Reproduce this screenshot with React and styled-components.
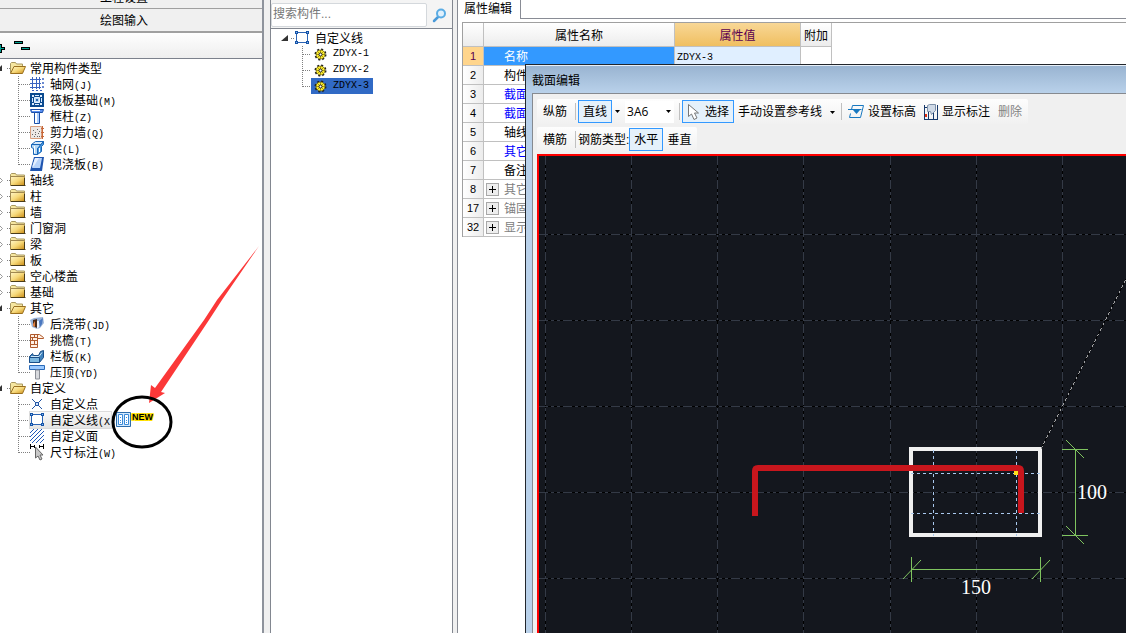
import React, { useState } from "react";
import styled, { createGlobalStyle } from "styled-components";

const GlobalStyle = createGlobalStyle`
  * {
    box-sizing: border-box;
  }
  body {
    margin: 0;
    overflow: hidden;
    background: #f0f0f0;
    color: #000;
    font-family: "Liberation Sans", "Noto Sans CJK SC", sans-serif;
    font-size: 12px;
    line-height: 16px;
  }
  button, input, select {
    font: inherit;
    color: inherit;
    margin: 0;
    padding: 0;
  }
  ul {
    list-style: none;
    margin: 0;
    padding: 0;
  }
`;

const commonTypes = [
  { icon: "grid", name: "轴网", hotkey: "(J)" },
  { icon: "raft", name: "筏板基础", hotkey: "(M)" },
  { icon: "column", name: "框柱", hotkey: "(Z)" },
  { icon: "wall", name: "剪力墙", hotkey: "(Q)" },
  { icon: "beam", name: "梁", hotkey: "(L)" },
  { icon: "slab", name: "现浇板", hotkey: "(B)" },
];

const otherTypes = [
  { icon: "strip", name: "后浇带", hotkey: "(JD)" },
  { icon: "eave", name: "挑檐", hotkey: "(T)" },
  { icon: "parapet", name: "栏板", hotkey: "(K)" },
  { icon: "coping", name: "压顶", hotkey: "(YD)" },
];

const customTypes = [
  { icon: "point", name: "自定义点" },
  { icon: "line", name: "自定义线", hotkey: "(X)", isNew: true },
  { icon: "area", name: "自定义面" },
  { icon: "dimension", name: "尺寸标注", hotkey: "(W)" },
];

const folders = [
  { name: "常用构件类型", items: commonTypes },
  { name: "轴线" },
  { name: "柱" },
  { name: "墙" },
  { name: "门窗洞" },
  { name: "梁" },
  { name: "板" },
  { name: "空心楼盖" },
  { name: "基础" },
  { name: "其它", items: otherTypes },
  { name: "自定义", items: customTypes },
];

const properties = [
  { id: 1, name: "名称", value: "ZDYX-3", selected: true },
  { id: 2, name: "构件类型" },
  { id: 3, name: "截面形状", color: "#0000ff" },
  { id: 4, name: "截面宽度", color: "#0000ff" },
  { id: 5, name: "轴线距左边线" },
  { id: 6, name: "其它钢筋", color: "#0000ff" },
  { id: 7, name: "备注" },
  { id: 8, name: "其它属性", color: "#808080", group: true },
  { id: 17, name: "锚固搭接", color: "#808080", group: true },
  { id: 32, name: "显示样式", color: "#808080", group: true },
];

const icons = {
  grid: (
    <g fill="none" stroke="#3a63c0">
      <path d="M0 3.500h11M0 7.500h11M0 11.500h11M2.500 1v12M6.500 1v12M9.500 1v12" />
      <path d="M12.500 2.500h1v1h-1zM12.500 6.500h1v1h-1zM12.500 10.500h1v1h-1zM2 14.500h2M6 14.500h2M10 14.500h2" />
    </g>
  ),
  raft: (
    <g>
      <path fill="#0b4a8f" d="M0 1h14v14H0z" />
      <path fill="#dcecff" d="M2 3h2v2H2zM10 3h2v2h-2zM2 11h2v2H2zM10 11h2v2h-2zM5 3h4v1H5zM5 12h4v1H5zM2 6h1v4H2zM11 6h1v4h-1z" />
      <path fill="#b8d8f8" stroke="#e8f4ff" d="M4.500 5.500h5v5h-5z" />
      <path fill="#2a6ab0" d="M6 7h2v2H6z" />
    </g>
  ),
  column: (
    <g>
      <path fill="#5b8ff0" stroke="#1a4fa8" d="M.5 1.500h13l-1 3h-11z" />
      <path fill="#a8ccff" stroke="#1a4fa8" d="M4.500 4.500h5v11h-5z" />
      <path fill="#fff" d="M5 5h2v10H5zM2 2h8v1H2z" />
    </g>
  ),
  wall: (
    <g>
      <path fill="#ece8e6" stroke="#d9a080" d="M.5 2.500h11v12H.5z" />
      <path fill="#666" d="M3 6h1v1H3zM7 5h1v1H7zM5 8h1v1H5zM2 10h1v1H2zM8 9h1v1H8zM4 12h1v1H4zM7 12h1v1H7zM9 7h1v1H9zM9 12h1v1H9zM5 10h1v1H5z" />
      <path stroke="#c8683a" d="M12.500 2v13M11 4.500h3M11 8.500h3M11 12.500h3" />
    </g>
  ),
  beam: (
    <g stroke="#1a66b8" strokeLinejoin="round">
      <path fill="#d5e9fa" d="M1.500 4.500l4-3h8l-3 3.500z" />
      <path fill="#b5d8f5" d="M1.500 4.500h9l-1 3-2 1v6h-4v-6l-2-1z" />
      <path fill="#4a9ae0" d="M7.500 8.500l3-3.500 3-3.500v3l-2 2v5l-4 3z" />
      <path stroke="#fff" d="M4.500 6v7M9.500 8v4" />
    </g>
  ),
  slab: (
    <g>
      <path fill="#1f55b0" d="M4 1h10l-2 14H0z" />
      <path fill="#b8d4fa" d="M5 2h7l-2 10H2z" />
      <path fill="#e6f0ff" d="M5 2h4l-5 8-2 1z" />
    </g>
  ),
  strip: (
    <g>
      <path fill="#9bb4d8" d="M0 4l4-2 9-1 1 6-4 5-3 1-5-2z" />
      <path fill="#4a2a18" d="M3 4l4-1v9l-4-2z" />
      <path fill="#e08040" d="M3 8l2-3v6l-2-1z" />
      <path fill="#4a78c0" d="M9 5l4-3-1 6-2 3z" />
      <path fill="#eef4ff" d="M7 5h2v6l-2 2z" />
    </g>
  ),
  eave: (
    <g fill="#fff0e4" stroke="#b05a2c">
      <path d="M.5 2.500h9l4 3v1h-6v9h-7z" />
      <path fill="none" d="M0 5.500h7M0 8.500h7M0 12.500h7M4.500 3v2M2.500 6v2M4.500 9v3M7.500 3v4" />
    </g>
  ),
  parapet: (
    <g stroke="#1b4f88" strokeLinejoin="round">
      <path fill="#3f82bd" d="M-.5 8.500l3-3 1 2h5l2-4 3-1v7l-4 5h-10z" />
      <path fill="#7db8e0" d="M-.5 9.500h10v5h-10z" />
      <path stroke="#cfe8f8" d="M1 8.500h8l3-4" fill="none" />
    </g>
  ),
  coping: (
    <g>
      <path fill="#9ccaff" stroke="#2a6ab8" d="M-.5 1.500h15v4h-15z" />
      <path fill="#d8dade" stroke="#8a8e96" d="M5.500 6h4v9h-4z" />
    </g>
  ),
  point: (
    <g fill="none" stroke="#2456a4">
      <path d="M2 3l4 4M12 3L8 7M2 13l4-4M12 13L8 9" />
      <path d="M5.500 6.500h3v3h-3z" fill="#cfe4ff" />
    </g>
  ),
  line: (
    <g>
      <path fill="#fff" stroke="#2c64b4" d="M1.500 2.500h11v10h-11z" />
      <path fill="#1554a8" d="M0 1h3v3H0zM11 1h3v3h-3zM0 11h3v3H0zM11 11h3v3h-3z" />
      <path fill="#8cb8ee" d="M1 2h1v1H1zM12 2h1v1h-1zM1 12h1v1H1zM12 12h1v1h-1z" />
    </g>
  ),
  area: (
    <path
      stroke="#2058b8"
      fill="none"
      d="M0 5l4-4M0 9l8-8M0 13L12 1M2 15L14 3M6 15l8-8M10 15l4-4"
    />
  ),
  dimension: (
    <g>
      <path stroke="#000" d="M.5 0v5M4.500 1v3M9.500 1v3M13.500 0v5M1 2.500h4M9 2.500h4" />
      <path fill="#c8c8c8" stroke="#666" d="M5.500 3v11l2.500-2 2 4 2-1-2-4h3z" />
    </g>
  ),
};

function ItemIcon({ type }) {
  return (
    <svg width="16" height="16" overflow="visible" aria-hidden="true">
      {icons[type]}
    </svg>
  );
}

function FolderIcon({ open }) {
  return (
    <svg width="16" height="16" aria-hidden="true">
      <defs>
        <linearGradient id="folder" x1="0" y1="0" x2="1" y2="1">
          <stop offset="0" stopColor="#fff6c8" />
          <stop offset=".5" stopColor="#f6d878" />
          <stop offset="1" stopColor="#c98a14" />
        </linearGradient>
      </defs>
      {open ? (
        <>
          <path d="M.5 13V3.500l1-1h4l1 1.500h6V7" fill="#f6e6a0" stroke="#a89860" />
          <path d="M.5 13.500L4 6.500h11.500l-3 7z" fill="url(#folder)" stroke="#9a7020" />
        </>
      ) : (
        <>
          <path d="M.5 5V2.500l1-1h4l1 1.500h8V6" fill="#f6e6a0" stroke="#a89860" />
          <path d="M.5 4.500h14v9H.5z" fill="url(#folder)" stroke="#a08850" />
          <path d="M1 13.500h14.500M14.500 6v8" stroke="#4a3c18" fill="none" />
        </>
      )}
    </svg>
  );
}

function Expander({ open }) {
  return (
    <svg width="24" height="16" aria-hidden="true">
      {open ? (
        <path d="M10 11l6-6v6z" fill="#333" />
      ) : (
        <path d="M12.500 4.500l4 4-4 4z" fill="#fff" stroke="#999" />
      )}
      <path d="M21 8.500h3" stroke="#808080" strokeDasharray="1 1" />
    </svg>
  );
}

function Branch({ last }) {
  return (
    <svg width="44" height="16" aria-hidden="true">
      <path
        d={`M32.500 0v${last ? 9 : 16}M33 8.500h11`}
        stroke="#808080"
        strokeDasharray="1 1"
        fill="none"
      />
    </svg>
  );
}

function NewMark() {
  return (
    <NewTag>
      <svg width="16" height="16" aria-hidden="true">
        <path fill="#d4eaff" stroke="#2c6cab" d="M.5 .5h14v14H.5z" />
        <path fill="#fff" stroke="#3a8ad8" d="M2.500 2.500h4v10h-4zM8.500 2.500h4v10h-4z" />
        <path stroke="#3a8ad8" d="M4 5.500h1M4 8.500h1M4 10.500h1M10 5.500h1M10 8.500h1M10 10.500h1" />
      </svg>
      <NewText>NEW</NewText>
    </NewTag>
  );
}

function Folder({ name, items }) {
  return (
    <li>
      <TreeRow>
        <Expander open={Boolean(items)} />
        <FolderIcon open={Boolean(items)} />
        <RowLabel>{name}</RowLabel>
      </TreeRow>
      {items && (
        <ul>
          {items.map((item, i) => (
            <TreeRow as="li" key={item.name}>
              <Branch last={i === items.length - 1} />
              <Hover $active={item.isNew}>
                <ItemIcon type={item.icon} />
                <RowLabel>
                  {item.name}
                  <Mono>{item.hotkey}</Mono>
                </RowLabel>
              </Hover>
              {item.isNew && <NewMark />}
            </TreeRow>
          ))}
        </ul>
      )}
    </li>
  );
}

function Gear() {
  return (
    <svg width="13" height="13" aria-hidden="true">
      <circle cx="6.500" cy="6.500" r="5" fill="none" stroke="#222" strokeWidth="2" strokeDasharray="2 1.930" />
      <circle cx="6.500" cy="6.500" r="4.500" fill="#ffee30" stroke="#5a5000" strokeWidth=".6" />
      <path d="M6.500 2v9M2 6.500h9M3.500 3.500l6 6M9.500 3.500l-6 6" stroke="#6a6000" strokeWidth=".6" />
      <circle cx="6.500" cy="6.500" r="1.500" fill="#fff" stroke="#222" />
    </svg>
  );
}

function Caret() {
  return (
    <svg width="5" height="3" aria-hidden="true">
      <path d="M0 0h5L2.500 3z" />
    </svg>
  );
}

const gridX = [6, 92, 178, 264, 351, 437, 523];
const gridY = [78, 164, 250, 336, 422];

function Section() {
  return (
    <svg width="100%" height="100%" role="img" aria-label="截面">
      <g fill="none" shapeRendering="crispEdges">
        {gridX.map((x) => (
          <g key={x}>
            <line x1={x + 0.5} x2={x + 0.5} y1="0" y2="100%" stroke="#000" />
            <line x1={x + 0.5} x2={x + 0.5} y1="0" y2="100%" stroke="#343a46" strokeDasharray="9 3 3 3 3 3" />
          </g>
        ))}
        {gridY.map((y) => (
          <g key={y}>
            <line y1={y + 0.5} y2={y + 0.5} x1="0" x2="100%" stroke="#000" />
            <line y1={y + 0.5} y2={y + 0.5} x1="0" x2="100%" stroke="#343a46" strokeDasharray="9 3 3 3 3 3" />
          </g>
        ))}
        <rect x="372" y="293" width="129" height="86" stroke="#f0f0f0" strokeWidth="4" />
        <path
          d="M394.500 294v86M477.500 294v86M372 317.500h130M372 357.500h130"
          stroke="#a9c8ee"
          strokeDasharray="3 3"
        />
        <path d="M502 293L588 121" stroke="#000" />
        <path d="M502 293L588 121" stroke="#a0a0a0" strokeDasharray="3 3" />
      </g>
      <path
        d="M216 360v-45q0-3 3-3h260q3 0 3 3v42"
        fill="none"
        stroke="#c8161d"
        strokeWidth="6"
      />
      <rect x="475" y="315" width="4" height="4" fill="#ffe11a" />
      <g fill="none" stroke="#7fc45f">
        <path d="M536.500 293v87M523 293.500h26M523 379.500h26" />
        <path d="M527 284l18 18M527 370l18 18" />
        <path d="M372 413.500h130M372.500 401v25M501.500 401v25" />
        <path d="M364 423l18-19M493 423l18-19" />
      </g>
      <g fill="#fff" fontFamily="Liberation Serif, serif" fontSize="20">
        <text x="538" y="343">100</text>
        <text x="422" y="438">150</text>
      </g>
    </svg>
  );
}

function SectionEditor() {
  const [direction, setDirection] = useState("水平");
  return (
    <Dialog>
      <DialogTitle>截面编辑</DialogTitle>
      <DialogBody>
        <Bars>
          <Toolbar>
            <ToolText>纵筋</ToolText>
            <Divider />
            <ToolButton $active>直线</ToolButton>
            <CaretButton aria-label="更多线型">
              <Caret />
            </CaretButton>
            <SelectBox>
              <BarSelect aria-label="钢筋信息" defaultValue="3A6">
                <option>3A6</option>
              </BarSelect>
              <Caret />
            </SelectBox>
            <Divider />
            <ToolButton $active>
              <svg width="14" height="18" aria-hidden="true">
                <path d="M1.500 1.500v12l3-2.500 2.500 5.500 3-1.500-2.500-5h4z" fill="#fff" stroke="#777" />
              </svg>
              选择
            </ToolButton>
            <ToolButton>
              手动设置参考线
              <MenuCaret>
                <Caret />
              </MenuCaret>
            </ToolButton>
            <Divider />
            <ToolButton>
              <svg width="16" height="16" aria-hidden="true">
                <path d="M3.500 5.500l1-4h11l-3 12h-11l1-4M0 5.500h13.500" fill="none" stroke="#1878c0" />
                <path d="M5 6h7l-3.500 4z" fill="#1878c0" />
              </svg>
              设置标高
            </ToolButton>
            <ToolButton>
              <svg width="14" height="16" aria-hidden="true">
                <path d="M.5 1v15M13.500 1v15M4.500 8v8M9.500 8v8M0 15.500h14M1 3.500h3" stroke="#16386a" fill="none" />
                <path d="M3.500 1.500l2-1h6v6l-4 4-1-3h-3z" fill="#cfd9e6" stroke="#7d90a8" />
                <path d="M1 10h2v3H1z" fill="#e03010" />
              </svg>
              显示标注
            </ToolButton>
            <ToolButton disabled>删除</ToolButton>
          </Toolbar>
          <Toolbar>
            <ToolText>横筋</ToolText>
            <Divider />
            <ToolLabel>钢筋类型:</ToolLabel>
            {["水平", "垂直"].map((name) => (
              <ToolButton
                key={name}
                $active={direction === name}
                onClick={() => setDirection(name)}
              >
                {name}
              </ToolButton>
            ))}
          </Toolbar>
        </Bars>
        <Canvas>
          <Section />
        </Canvas>
      </DialogBody>
    </Dialog>
  );
}

function App() {
  return (
    <>
      <GlobalStyle />
      <Page>
        <Sidebar>
          <NavButton>工程设置</NavButton>
          <NavButton>绘图输入</NavButton>
          <TreeTools>
            <IconButton aria-label="全部展开">
              <svg width="16" height="12" aria-hidden="true">
                <path d="M9 4h3V1h3v3h3v3h-3v3h-3V7H9z" transform="translate(-3 1)" />
                <path d="M7 6.500h7M10.500 3v7" stroke="#00a090" />
              </svg>
            </IconButton>
            <IconButton aria-label="全部折叠">
              <svg width="17" height="14" aria-hidden="true">
                <path d="M0 0h9v3H0zM7 6h9v3H7z" />
                <path d="M1 1.500h7M8 7.500h7" stroke="#00a090" />
              </svg>
            </IconButton>
          </TreeTools>
          <Tree>
            {folders.map((folder) => (
              <Folder key={folder.name} {...folder} />
            ))}
          </Tree>
        </Sidebar>

        <Members>
          <Search>
            <SearchInput aria-label="搜索构件" placeholder="搜索构件..." />
            <SearchButton aria-label="搜索">
              <svg width="16" height="16" aria-hidden="true">
                <path d="M2 14l4-4" stroke="#4a9ad8" strokeWidth="2.500" strokeLinecap="round" />
                <circle cx="9" cy="6.500" r="4" fill="#dff0fc" stroke="#5aace4" strokeWidth="2" />
              </svg>
            </SearchButton>
          </Search>
          <MemberTree>
            <li>
              <TreeRow>
                <svg width="24" height="16" aria-hidden="true">
                  <path d="M10 11l7-6v6z" fill="#333" />
                  <path d="M20 8.500h3" stroke="#808080" strokeDasharray="1 1" />
                </svg>
                <ItemIcon type="line" />
                <RowLabel>自定义线</RowLabel>
              </TreeRow>
              <ul>
                {["ZDYX-1", "ZDYX-2", "ZDYX-3"].map((name) => (
                  <TreeRow as="li" key={name}>
                    <svg width="40" height="16" aria-hidden="true">
                      <path
                        d={`M31.500 0v${name === "ZDYX-3" ? 9 : 16}M32 8.500h8`}
                        stroke="#808080"
                        strokeDasharray="1 1"
                        fill="none"
                      />
                    </svg>
                    <Member $selected={name === "ZDYX-3"}>
                      <Gear />
                      <Mono>{name}</Mono>
                    </Member>
                  </TreeRow>
                ))}
              </ul>
            </li>
          </MemberTree>
        </Members>

        <Properties>
          <TabBar>
            <Tab>属性编辑</Tab>
          </TabBar>
          <TableFrame>
            <Table>
              <colgroup>
                <col width="21" />
                <col width="191" />
                <col width="126" />
                <col width="31" />
              </colgroup>
              <thead>
                <tr>
                  <HeadCell aria-label="序号" />
                  <HeadCell>属性名称</HeadCell>
                  <HeadCell $current>属性值</HeadCell>
                  <HeadCell>附加</HeadCell>
                </tr>
              </thead>
              <tbody>
                {properties.map((row) => (
                  <tr key={row.id}>
                    <NumCell $current={row.selected}>{row.id}</NumCell>
                    <NameCell $color={row.color} $selected={row.selected}>
                      <NameInner>
                        <Slot>
                          {row.group && (
                            <PlusButton aria-label={`展开${row.name}`}>
                              <svg width="7" height="7" aria-hidden="true">
                                <path d="M0 3.500h7M3.500 0v7" stroke="#000" />
                              </svg>
                            </PlusButton>
                          )}
                        </Slot>
                        <NameText>{row.name}</NameText>
                      </NameInner>
                    </NameCell>
                    <ValueCell $selected={row.selected}>
                      <Mono>{row.value}</Mono>
                    </ValueCell>
                    <ValueCell />
                  </tr>
                ))}
              </tbody>
            </Table>
          </TableFrame>
          <SectionEditor />
        </Properties>

        <Callout width="264" height="460" aria-hidden="true">
          <path
            d="M259 246L217 300 204 320 155 388 151 385 149 403 165 393 161 392 209 320 222 300z"
            fill="#fb3838"
          />
          <ellipse cx="142" cy="422" rx="29" ry="25" fill="none" stroke="#000" strokeWidth="3" />
        </Callout>
      </Page>
    </>
  );
}

const Page = styled.div`
  position: relative;
  display: flex;
  height: 100vh;
  overflow: hidden;
`;

/* the sidebar starts a little outside the window */
const Sidebar = styled.div`
  display: flex;
  flex-direction: column;
  flex: 0 0 278px;
  margin: -14px 0 0 -14px;
  border-right: 2px solid #8e939c;
`;

const NavButton = styled.button`
  flex: none;
  height: 23px;
  border: none;
  border-bottom: 1px solid #a0a0a0;
  padding-top: 2px;
  background: #f0f0f0;
`;

const TreeTools = styled.div`
  display: flex;
  align-items: center;
  flex: none;
  gap: 8px;
  height: 26px;
  border-top: 1px solid #a0a0a0;
  padding: 4px 0 0 4px;
  background: linear-gradient(#fefefe, #eeeeee);
`;

const IconButton = styled.button`
  display: flex;
  border: none;
  background: none;
`;

const Tree = styled.ul`
  flex: 1;
  border-top: 1px solid #7c818c;
  padding-top: 1px;
  background: #fff;
`;

const TreeRow = styled.div`
  display: flex;
  align-items: center;
  height: 16px;
  white-space: nowrap;
  svg {
    flex: none;
  }
`;

const RowLabel = styled.span`
  padding: 1px 0 0 4px;
`;

const Mono = styled.span`
  font-family: "Liberation Mono", monospace;
  font-size: 10px;
  line-height: 10px;
`;

const Hover = styled.div`
  display: flex;
  align-items: center;
  height: 16px;
  ${(props) =>
    props.$active &&
    `
    width: 81px;
    overflow: hidden;
    background: linear-gradient(#fafafa, #e4e4e4);
    box-shadow: 0 0 0 1px #dcdcdc;
  `}
`;

const NewTag = styled.div`
  display: flex;
  align-items: center;
  padding-left: 5px;
`;

const NewText = styled.span`
  margin-top: -6px;
  font-size: 9px;
  font-weight: bold;
  line-height: 12px;
  text-shadow: 1px 0 #ffe000, -1px 0 #ffe000, 0 1px #ffe000, 0 -1px #ffe000,
    1px 1px #ffe000, -1px -1px #ffe000, 1px -1px #ffe000, -1px 1px #ffe000;
`;

const Members = styled.div`
  display: flex;
  flex-direction: column;
  flex: 0 0 183px;
  min-width: 0;
  margin-left: 6px;
  border: solid #828790;
  border-width: 0 1px;
`;

const Search = styled.div`
  display: flex;
  align-items: center;
  flex: none;
  height: 28px;
  padding-top: 2px;
  background: #f4f4f4;
`;

const SearchInput = styled.input`
  flex: 1;
  min-width: 0;
  height: 24px;
  border: 1px solid #d4d8dc;
  border-radius: 2px;
  padding: 0 1px 2px;
  background: #fff;
  &::placeholder {
    color: #777;
  }
`;

const SearchButton = styled.button`
  display: flex;
  justify-content: center;
  flex: none;
  width: 25px;
  border: none;
  background: none;
`;

const MemberTree = styled.ul`
  flex: 1;
  border-top: 1px solid #828790;
  padding-top: 1px;
  background: #fff;
`;

const Member = styled.div`
  display: flex;
  align-items: center;
  gap: 6px;
  height: 16px;
  padding: 0 4px 0 3px;
  background: ${(props) => (props.$selected ? "#316ac5" : "none")};
`;

const Properties = styled.div`
  position: relative;
  flex: 1;
  min-width: 0;
  margin-left: 4px;
  border-left: 1px solid #888c94;
  background: #fff;
`;

const TabBar = styled.div`
  display: flex;
  height: 19px;
  &::after {
    content: "";
    flex: 1;
    border-bottom: 1px solid #898c95;
  }
`;

const Tab = styled.div`
  border-right: 1px solid #898c95;
  padding: 1px 8px 0 6px;
`;

const TableFrame = styled.div`
  margin: 3px 0 0 4px;
  border: solid #a0a0a0;
  border-width: 1px 0 0 1px;
`;

const Table = styled.table`
  width: 369px;
  table-layout: fixed;
  border-collapse: separate;
  border-spacing: 0;
  th, td {
    border: solid #c0c0c0;
    border-width: 0 1px 1px 0;
    font-weight: normal;
    white-space: nowrap;
  }
`;

const HeadCell = styled.th`
  height: 24px;
  padding: 2px 0 0;
  color: ${(props) => (props.$current ? "#5a0050" : "#000")};
  background: ${(props) =>
    props.$current
      ? "linear-gradient(#f8d796, #f0bf60)"
      : "linear-gradient(#ffffff, #ececec)"};
`;

const NumCell = styled.td`
  height: 19px;
  padding: 0;
  text-align: center;
  font-size: 11px;
  color: ${(props) => (props.$current ? "#5a0050" : "#000")};
  background: ${(props) =>
    props.$current ? "#ffd58c" : "linear-gradient(90deg, #ffffff, #ececec)"};
`;

const NameCell = styled.td`
  padding: 0;
  color: ${(props) => (props.$selected ? "#fff" : props.$color || "#000")};
  background: ${(props) => (props.$selected ? "#3399ff" : "#fff")};
`;

const NameInner = styled.div`
  display: flex;
  align-items: center;
  height: 18px;
`;

const NameText = styled.span`
  padding-top: 2px;
`;

const Slot = styled.span`
  display: flex;
  width: 20px;
  padding-left: 2px;
`;

const PlusButton = styled.button`
  display: flex;
  align-items: center;
  justify-content: center;
  width: 13px;
  height: 13px;
  border: 1px solid #a8a8a8;
  background: #eeeeee;
`;

const ValueCell = styled.td`
  padding: 0 0 0 2px;
  background: ${(props) => (props.$selected ? "#e0efff" : "#fff")};
`;

/* floats over the property table and runs off the window */
const Dialog = styled.section`
  position: absolute;
  top: 64px;
  right: 0;
  bottom: 0;
  left: 67px;
  display: flex;
  flex-direction: column;
  border: solid #22262c;
  border-width: 1px 0 0 1px;
  padding: 1px 0 0 6px;
  background: linear-gradient(#e8f0f8 1px, #99b4d1 1px, #b9d1ea 28px);
`;

const DialogTitle = styled.div`
  flex: none;
  height: 27px;
  padding-top: 7px;
`;

const DialogBody = styled.div`
  display: flex;
  flex-direction: column;
  flex: 1;
  min-height: 0;
  border: solid #868a90;
  border-width: 1px 0 0 1px;
  padding: 5px 0 0 4px;
  background: #f0f0f0;
`;

const Bars = styled.div`
  display: flex;
  flex-direction: column;
  align-items: flex-start;
  flex: none;
  gap: 3px;
  padding-bottom: 2px;
`;

const Toolbar = styled.div`
  display: flex;
  align-items: center;
  height: 25px;
  padding: 0 2px 0 5px;
  border-radius: 2px;
  background: linear-gradient(#fdfdfd, #f1f1f1);
  white-space: nowrap;
`;

const ToolText = styled.span`
  padding: 1px 8px 0 1px;
`;

const ToolLabel = styled.label`
  padding-top: 1px;
`;

const Divider = styled.span`
  width: 1px;
  height: 17px;
  margin-right: 2px;
  background: #c0c0c0;
`;

const ToolButton = styled.button`
  display: flex;
  align-items: center;
  gap: 4px;
  height: 23px;
  border: 1px solid ${(props) => (props.$active ? "#3399ff" : "transparent")};
  padding: 1px ${(props) => (props.$active ? "4px" : "3px")} 0;
  background: ${(props) => (props.$active ? "#e5f1fb" : "none")};
  &:disabled {
    color: #838383;
  }
`;

const CaretButton = styled.button`
  display: flex;
  border: none;
  padding: 0 5px 0 3px;
  background: none;
`;

const MenuCaret = styled.span`
  display: flex;
  padding: 0 2px 0 4px;
`;

const SelectBox = styled.div`
  display: flex;
  align-items: center;
  height: 22px;
  margin-right: 5px;
  padding-right: 3px;
  background: #fff;
`;

const BarSelect = styled.select`
  appearance: none;
  width: 41px;
  border: none;
  padding-left: 2px;
  outline: none;
  background: none;
  font-family: "Open Sans", sans-serif;
`;

const Canvas = styled.div`
  flex: 1;
  min-height: 0;
  border: solid #ff0000;
  border-width: 2px 0 0 2px;
  background: #14171e;
  svg {
    display: block;
  }
`;

const Callout = styled.svg`
  position: absolute;
  top: 0;
  left: 0;
  pointer-events: none;
`;

export default App;
